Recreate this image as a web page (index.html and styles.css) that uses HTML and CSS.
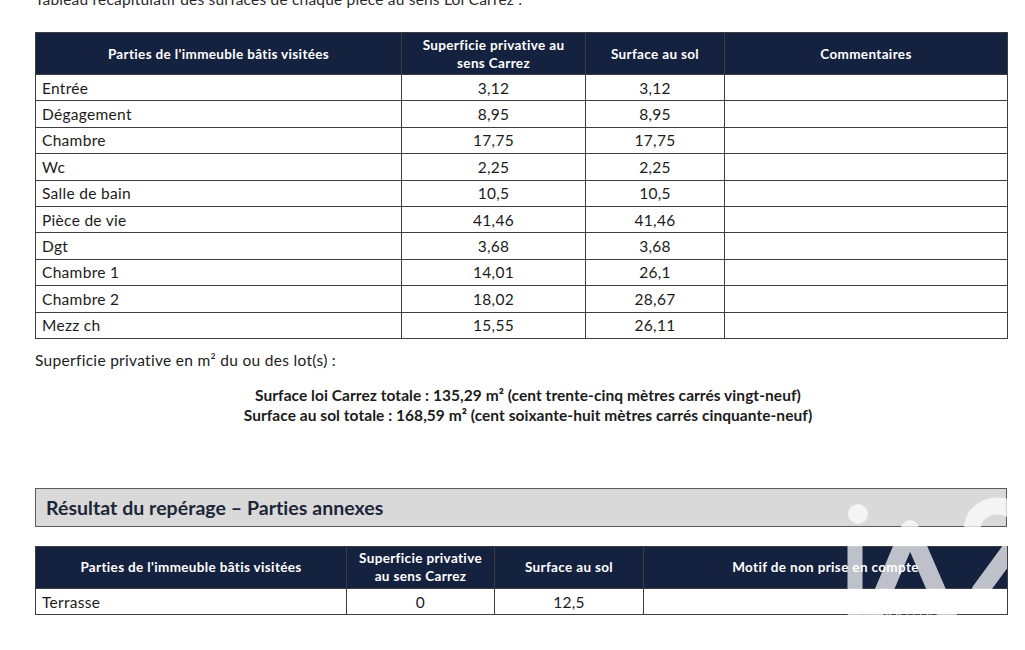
FILE: index.html
```html
<!DOCTYPE html>
<html lang="fr">
<head>
<meta charset="utf-8">
<title>Surfaces Loi Carrez</title>
<link rel="stylesheet" href="styles.css">
</head>
<body>
<div class="page">
  <p class="intro">Tableau récapitulatif des surfaces de chaque pièce au sens Loi Carrez :</p>

  <table class="grid grid-main">
    <colgroup>
      <col class="c1"><col class="c2"><col class="c3"><col class="c4">
    </colgroup>
    <thead>
      <tr>
        <th>Parties de l'immeuble bâtis visitées</th>
        <th>Superficie privative au<br>sens Carrez</th>
        <th>Surface au sol</th>
        <th>Commentaires</th>
      </tr>
    </thead>
    <tbody>
      <tr><td class="name">Entrée</td><td>3,12</td><td>3,12</td><td></td></tr>
      <tr><td class="name">Dégagement</td><td>8,95</td><td>8,95</td><td></td></tr>
      <tr><td class="name">Chambre</td><td>17,75</td><td>17,75</td><td></td></tr>
      <tr><td class="name">Wc</td><td>2,25</td><td>2,25</td><td></td></tr>
      <tr><td class="name">Salle de bain</td><td>10,5</td><td>10,5</td><td></td></tr>
      <tr><td class="name">Pièce de vie</td><td>41,46</td><td>41,46</td><td></td></tr>
      <tr><td class="name">Dgt</td><td>3,68</td><td>3,68</td><td></td></tr>
      <tr><td class="name">Chambre 1</td><td>14,01</td><td>26,1</td><td></td></tr>
      <tr><td class="name">Chambre 2</td><td>18,02</td><td>28,67</td><td></td></tr>
      <tr><td class="name">Mezz ch</td><td>15,55</td><td>26,11</td><td></td></tr>
    </tbody>
  </table>

  <p class="lots">Superficie privative en m² du ou des lot(s) :</p>

  <div class="totals">
    <p>Surface loi Carrez totale : 135,29 m² (cent trente-cinq mètres carrés vingt-neuf)</p>
    <p>Surface au sol totale : 168,59 m² (cent soixante-huit mètres carrés cinquante-neuf)</p>
  </div>

  <div class="section">
    <h2 class="section-title">Résultat du repérage – Parties annexes</h2>

    <table class="grid grid-annex">
      <colgroup>
        <col class="a1"><col class="a2"><col class="a3"><col class="a4">
      </colgroup>
      <thead>
        <tr>
          <th>Parties de l'immeuble bâtis visitées</th>
          <th>Superficie privative<br>au sens Carrez</th>
          <th>Surface au sol</th>
          <th>Motif de non prise en compte</th>
        </tr>
      </thead>
      <tbody>
        <tr><td class="name">Terrasse</td><td>0</td><td>12,5</td><td></td></tr>
      </tbody>
    </table>

    <div class="watermark" aria-hidden="true">
      <svg class="wm-svg" width="167" height="125" viewBox="840 495 167 125">
        <circle cx="858" cy="513" r="10" fill="#fff"/>
        <line x1="855" y1="536" x2="855" y2="612" stroke="#fff" stroke-width="15" stroke-linecap="round"/>
        <polyline points="872,618 910,528 949,618" fill="none" stroke="#fff" stroke-width="18" stroke-linejoin="round" stroke-linecap="round"/>
        <path d="M972 530 C972 514 984 505 998 505 C1016 505 1024 520 1018 538 L980 590" fill="none" stroke="#fff" stroke-width="17" stroke-linecap="round" stroke-linejoin="round"/>
      </svg>
      <span class="wm-text">immobilier</span>
    </div>
  </div>
</div>
</body>
</html>
```

FILE: styles.css
```css
html, body {
  margin: 0;
  padding: 0;
  background: #ffffff;
}

body {
  font-family: Lato, "Open Sans", "Liberation Sans", sans-serif;
  color: #1b1b1b;
  overflow: hidden;
}

.page {
  width: 972px;
  padding-left: 35px;
}

.intro {
  margin: -10px 0 0 0;
  font-size: 15.5px;
  letter-spacing: 0.2px;
  line-height: 18px;
  color: #2a2a2a;
}

.grid {
  width: 972px;
  border-collapse: collapse;
  table-layout: fixed;
}

.grid-main {
  margin-top: 24px;
}

.grid-main .c1 { width: 366px; }
.grid-main .c2 { width: 184px; }
.grid-main .c3 { width: 139px; }
.grid-main .c4 { width: 283px; }

.grid-annex .a1 { width: 311px; }
.grid-annex .a2 { width: 148px; }
.grid-annex .a3 { width: 149px; }
.grid-annex .a4 { width: 364px; }

.grid th {
  background: #15223f;
  color: #ffffff;
  font-weight: 700;
  font-size: 13.5px;
  letter-spacing: 0.35px;
  line-height: 18px;
  height: 41px;
  padding: 0 4px;
  border: 1px solid #3d3d3d;
  text-align: center;
  vertical-align: middle;
}

.grid td {
  height: 25.4px;
  padding: 0 6px;
  border: 1px solid #3d3d3d;
  font-size: 15.5px;
  letter-spacing: 0.3px;
  line-height: 18px;
  text-align: center;
  vertical-align: middle;
}

.grid td.name {
  text-align: left;
}

.lots {
  margin: 12px 0 0 0;
  font-size: 15.5px;
  letter-spacing: 0.3px;
  line-height: 18px;
}

.totals {
  margin-top: 16px;
  padding-left: 14px;
  text-align: center;
  font-weight: 700;
  font-size: 15.5px;
  letter-spacing: 0.05px;
  line-height: 20px;
}

.totals p {
  margin: 0;
}

.section {
  position: relative;
  margin-top: 63px;
}

.section-title {
  margin: 0;
  height: 39px;
  box-sizing: border-box;
  background: #d9d9d9;
  border: 1px solid #5a5a5a;
  padding: 0 10px;
  font-size: 19.5px;
  letter-spacing: 0.05px;
  line-height: 37px;
  font-weight: 700;
  color: #1d2638;
}

.grid-annex {
  margin-top: 19px;
}

.watermark {
  position: absolute;
  left: 805px;
  top: 8px;
  width: 167px;
  height: 125px;
  overflow: hidden;
  opacity: 0.72;
  pointer-events: none;
}

.wm-svg {
  display: block;
}

.wm-text {
  position: absolute;
  left: 12px;
  top: 113px;
  font-size: 11px;
  line-height: 12px;
  font-weight: 700;
  letter-spacing: 4px;
  color: #ffffff;
}
```
